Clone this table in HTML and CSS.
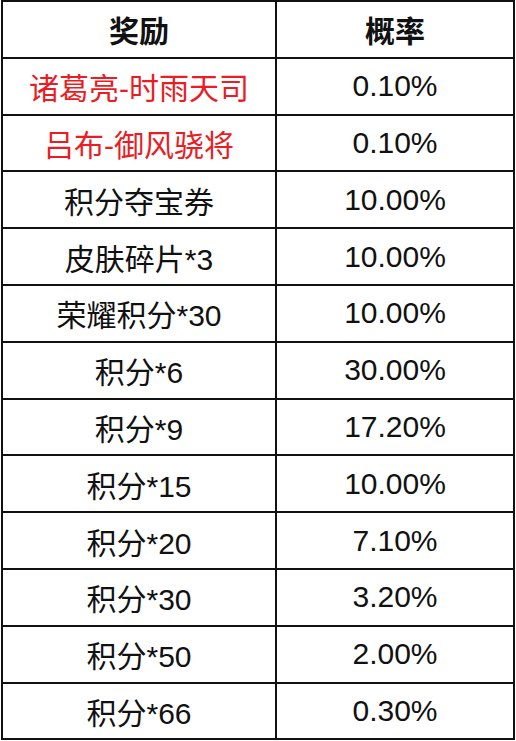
FILE: index.html
```html
<!DOCTYPE html>
<html lang="zh-CN">
<head>
<meta charset="utf-8">
<title>奖励概率</title>
<link rel="stylesheet" href="styles.css">
</head>
<body>
<div class="table">
  <div class="cell head">奖励</div><div class="cell head">概率</div>
  <div class="cell red">诸葛亮-时雨天司</div><div class="cell">0.10%</div>
  <div class="cell red">吕布-御风骁将</div><div class="cell">0.10%</div>
  <div class="cell">积分夺宝券</div><div class="cell">10.00%</div>
  <div class="cell">皮肤碎片*3</div><div class="cell">10.00%</div>
  <div class="cell">荣耀积分*30</div><div class="cell">10.00%</div>
  <div class="cell">积分*6</div><div class="cell">30.00%</div>
  <div class="cell">积分*9</div><div class="cell">17.20%</div>
  <div class="cell">积分*15</div><div class="cell">10.00%</div>
  <div class="cell">积分*20</div><div class="cell">7.10%</div>
  <div class="cell">积分*30</div><div class="cell">3.20%</div>
  <div class="cell">积分*50</div><div class="cell">2.00%</div>
  <div class="cell">积分*66</div><div class="cell">0.30%</div>
</div>
</body>
</html>
```
FILE: styles.css
```css
html, body {
  margin: 0;
  padding: 0;
  background: #fff;
}
body {
  padding-left: 1px;
}
.table {
  width: 514px;
  box-sizing: border-box;
  display: grid;
  grid-template-columns: 272px 236px;
  grid-auto-rows: 54.8px;
  gap: 2px;
  padding: 2px;
  background: #111;
  font-family: "Liberation Sans", "Noto Sans CJK SC", sans-serif;
  font-size: 30px;
  color: #111;
}
.cell {
  background: #fff;
  display: flex;
  align-items: center;
  justify-content: center;
  white-space: nowrap;
}
.head {
  font-weight: bold;
}
.red {
  color: #ea1c24;
}
```
